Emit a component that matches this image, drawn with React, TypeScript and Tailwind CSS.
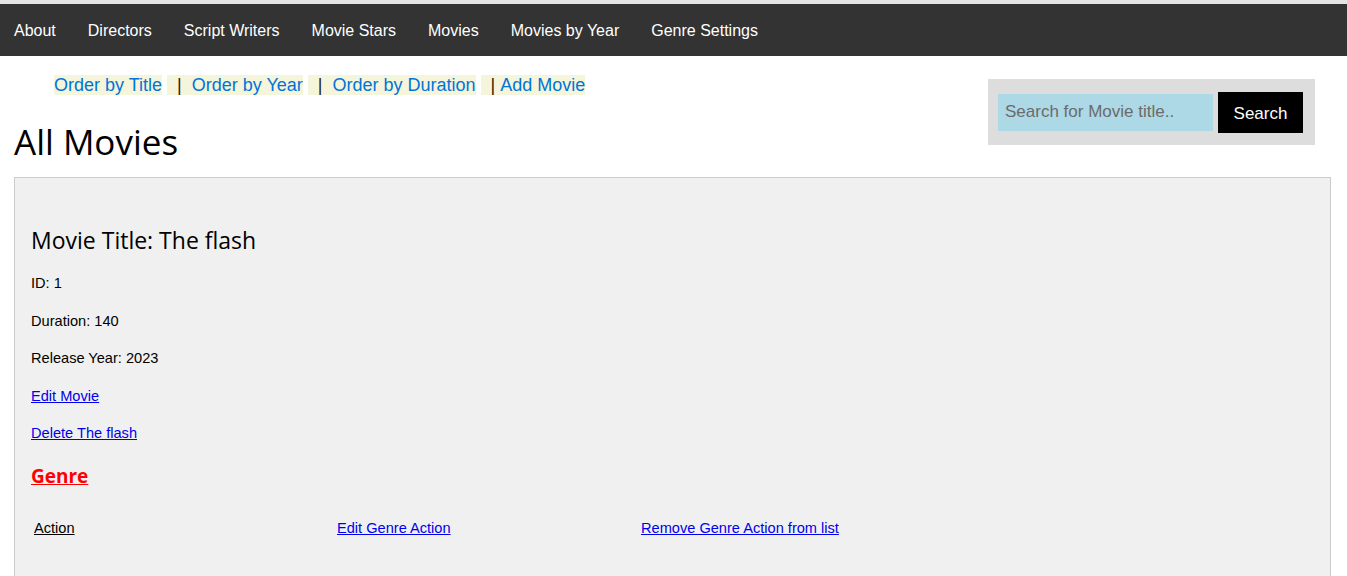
import React from 'react';

const navLinks = ['About', 'Directors', 'Script Writers', 'Movie Stars', 'Movies', 'Movies by Year', 'Genre Settings'];

const orderLinks = ['Order by Title', 'Order by Year', 'Order by Duration', 'Add Movie'];

const arial = { fontFamily: '"Liberation Sans", Arial, sans-serif' };
const segoe = { fontFamily: '"Open Sans", sans-serif' };

const App: React.FC = () => {
  return (
    <div className="min-h-[576px] bg-white text-black" style={arial}>
      <div className="h-[4px] bg-[#e4e4e6]" />
      <nav className="flex h-[52px] items-center gap-8 bg-[#333333] pt-[2px] pl-[14px]">
        {navLinks.map((link) => (
          <a key={link} href="#" className="text-[16px] leading-[18px] text-white">
            {link}
          </a>
        ))}
      </nav>

      <div className="flex items-start justify-between pl-[14px] pr-[32px]">
        <div>
          <ul className="mt-[19px] flex pl-10 text-[18px] leading-[20px]">
            {orderLinks.map((link, i) => (
              <li key={link} className="mr-[5px] bg-[#f5f5dc] last:mr-0">
                {i > 0 && i < orderLinks.length - 1 && (
                  <span className="text-[#2a1a0a]">&nbsp;&nbsp;|&nbsp;&nbsp;</span>
                )}
                {i === orderLinks.length - 1 && <span className="text-[#2a1a0a]">&nbsp;&nbsp;|&nbsp;</span>}
                <a href="#" className="text-[#0074d9]">
                  {link}
                </a>
              </li>
            ))}
          </ul>
          <h1 className="mt-[25px] text-[35px] leading-[43px] font-normal" style={segoe}>
            All Movies
          </h1>
        </div>

        <div className="mt-[23px] flex h-[66px] w-[327px] items-center gap-[5px] bg-[#dddddd] pl-[10px] pr-[12px]">
          <input
            type="text"
            placeholder="Search for Movie title.."
            className="h-[37px] w-[215px] bg-[#add8e6] px-[7px] text-[17px] text-[#333] placeholder:text-[#6b6b6b] outline-none"
          />
          <button className="h-[41px] w-[85px] bg-black pt-[3px] text-[17px] text-white">Search</button>
        </div>
      </div>

      <div className="mt-[14px] ml-[14px] mr-[16px] h-[420px] border border-[#cccccc] bg-[#f0f0f0] pl-[16px] pt-[48px]">
        <h2 className="text-[23px] leading-[28px] font-normal" style={segoe}>
          Movie Title: The flash
        </h2>
        <div className="mt-[21px] flex flex-col gap-[21.6px] text-[14.6px] leading-[16px]">
          <p>ID: 1</p>
          <p>Duration: 140</p>
          <p>Release Year: 2023</p>
          <a href="#" className="w-fit text-[#0000ee] underline">
            Edit Movie
          </a>
          <a href="#" className="w-fit text-[#0000ee] underline">
            Delete The flash
          </a>
        </div>
        <h3
          className="mt-[23px] w-fit text-[19px] leading-[24px] font-bold text-[#ff0000] underline"
          style={segoe}
        >
          Genre
        </h3>
        <div className="mt-[32px] ml-[3px] grid grid-cols-[303px_304px_auto] text-[14.6px] leading-[16px]">
          <a href="#" className="w-fit text-black underline">
            Action
          </a>
          <a href="#" className="w-fit text-[#0000ee] underline">
            Edit Genre Action
          </a>
          <a href="#" className="w-fit text-[#0000ee] underline">
            Remove Genre Action from list
          </a>
        </div>
      </div>
    </div>
  );
};

export default App;
